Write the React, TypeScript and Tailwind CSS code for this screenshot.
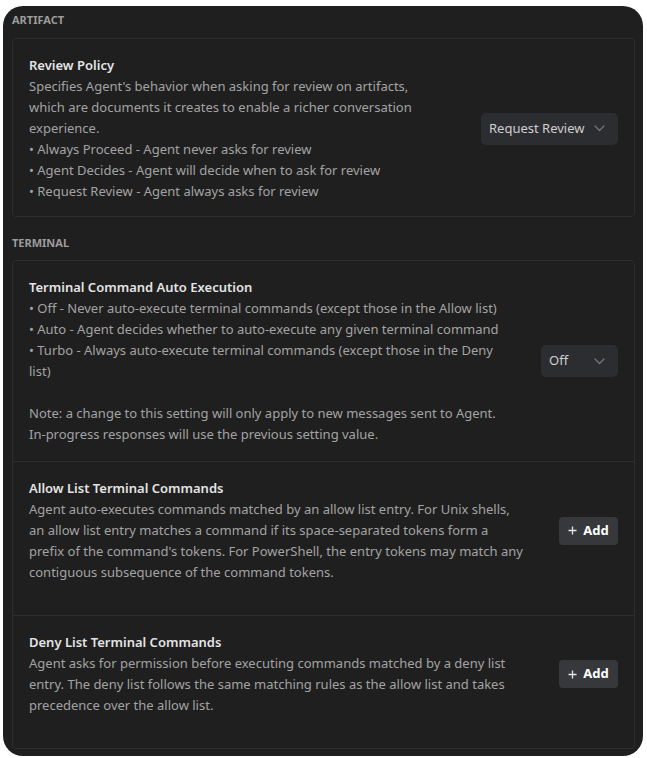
import React from "react";

const F = { fontFamily: "'Noto Sans', 'Open Sans', sans-serif" };

function Chevron() {
  return (
    <svg width="11" height="7" viewBox="0 0 11 7" fill="none" className="shrink-0">
      <path d="M1 1l4.5 4.5L10 1" stroke="#71757c" strokeWidth="1.3" strokeLinecap="round" strokeLinejoin="round" />
    </svg>
  );
}

function Select({ label, w }: { label: string; w: string }) {
  return (
    <div className={`${w} h-[32px] shrink-0 rounded-[5px] bg-[#2c2d31] flex items-center justify-between pl-[8px] pr-[13px] text-[13px] text-[#cfcfcf]`}>
      <span>{label}</span>
      <Chevron />
    </div>
  );
}

function AddButton() {
  return (
    <div className="w-[59px] h-[28px] shrink-0 rounded-[4px] bg-[#36383c] flex items-center justify-center gap-[6px] text-[13px] font-bold text-white">
      <svg width="9" height="9" viewBox="0 0 9 9" className="shrink-0">
        <path d="M4.5 0.5v8M0.5 4.5h8" stroke="#e6e6e6" strokeWidth="1.3" />
      </svg>
      <span>Add</span>
    </div>
  );
}

function Header({ children, cls }: { children: React.ReactNode; cls: string }) {
  return (
    <div className={`${cls} text-[11px] leading-[14px] font-bold text-[#9c9c9c] uppercase`}>{children}</div>
  );
}

function Title({ children }: { children: React.ReactNode }) {
  return <div className="text-[13px] leading-[21px] font-semibold text-[#e4e4e4]">{children}</div>;
}

function Desc({ lines }: { lines: string[] }) {
  return (
    <div className="text-[13px] leading-[21px] text-[#a3a3a3] whitespace-nowrap">
      {lines.map((l, i) => (l === "" ? <div key={i} className="h-[21px]" /> : <div key={i}>{l}</div>))}
    </div>
  );
}

export default function App() {
  return (
    <div className="bg-white w-[647px] h-[758px] pt-[6px] pl-[3px]" style={F}>
      <div className="w-[640px] h-[750px] rounded-[20px] bg-[#1f1f1f] overflow-hidden pl-[9px] pr-[8px]">
        <Header cls="pt-[7px] pb-[11px]">Artifact</Header>
        <div className="border border-[#2d2d2d] rounded-[4px] pl-[16px] pr-[16px] pt-[16px] pb-[14px] flex items-center gap-8">
          <div className="flex-1 min-w-0">
            <Title>Review Policy</Title>
            <Desc
              lines={[
                "Specifies Agent's behavior when asking for review on artifacts,",
                "which are documents it creates to enable a richer conversation",
                "experience.",
                "• Always Proceed - Agent never asks for review",
                "• Agent Decides - Agent will decide when to ask for review",
                "• Request Review - Agent always asks for review",
              ]}
            />
          </div>
          <Select label="Request Review" w="w-[137px]" />
        </div>

        <Header cls="pt-[19px] pb-[10px]">Terminal</Header>
        <div className="border border-[#2d2d2d] rounded-[4px]">
          <div className="px-[16px] py-[16px] flex items-center gap-8 border-b border-[#2d2d2d]">
            <div className="flex-1 min-w-0">
              <Title>Terminal Command Auto Execution</Title>
              <Desc
                lines={[
                  "• Off - Never auto-execute terminal commands (except those in the Allow list)",
                  "• Auto - Agent decides whether to auto-execute any given terminal command",
                  "• Turbo - Always auto-execute terminal commands (except those in the Deny",
                  "list)",
                  "",
                  "Note: a change to this setting will only apply to new messages sent to Agent.",
                  "In-progress responses will use the previous setting value.",
                ]}
              />
            </div>
            <Select label="Off" w="w-[77px]" />
          </div>

          <div className="border-b border-[#2d2d2d] pb-[16px]">
            <div className="px-[16px] py-[16px] flex items-center gap-8">
              <div className="flex-1 min-w-0">
                <Title>Allow List Terminal Commands</Title>
                <Desc
                  lines={[
                    "Agent auto-executes commands matched by an allow list entry. For Unix shells,",
                    "an allow list entry matches a command if its space-separated tokens form a",
                    "prefix of the command's tokens. For PowerShell, the entry tokens may match any",
                    "contiguous subsequence of the command tokens.",
                  ]}
                />
              </div>
              <AddButton />
            </div>
          </div>

          <div className="pb-[16px]">
            <div className="px-[16px] py-[16px] flex items-center gap-8">
              <div className="flex-1 min-w-0">
                <Title>Deny List Terminal Commands</Title>
                <Desc
                  lines={[
                    "Agent asks for permission before executing commands matched by a deny list",
                    "entry. The deny list follows the same matching rules as the allow list and takes",
                    "precedence over the allow list.",
                  ]}
                />
              </div>
              <AddButton />
            </div>
          </div>
        </div>
      </div>
    </div>
  );
}
